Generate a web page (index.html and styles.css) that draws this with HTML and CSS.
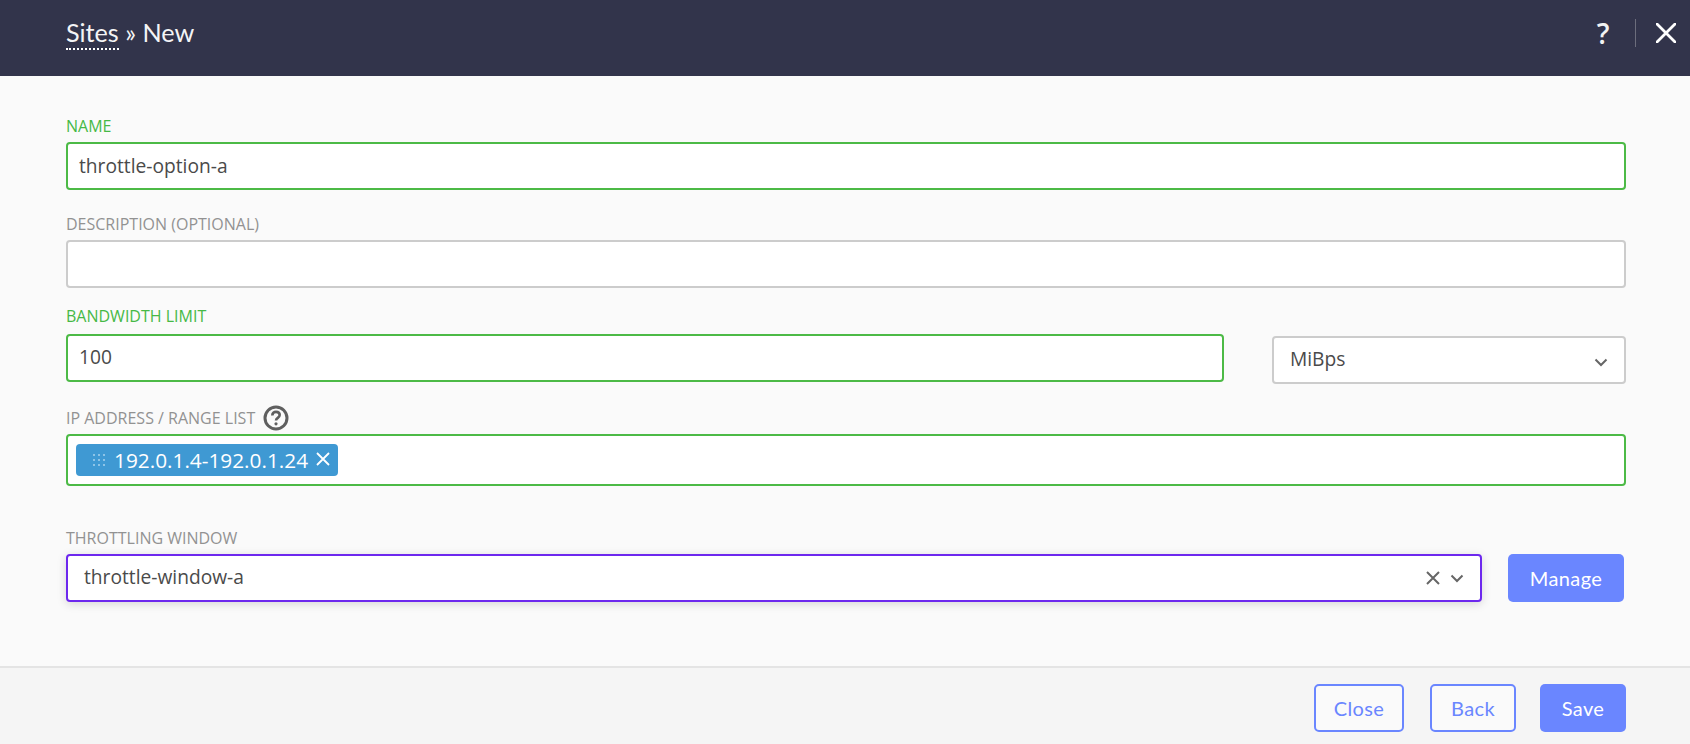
FILE: index.html
```html
<!DOCTYPE html>
<html lang="en">
<head>
<meta charset="utf-8">
<title>Sites » New</title>
<link rel="stylesheet" href="styles.css">
</head>
<body>
<div class="page">
  <header class="topbar">
    <h1 class="crumbs"><span class="crumb-link">Sites</span> » New</h1>
    <div class="top-actions">
      <span class="help">?</span>
      <span class="divider"></span>
      <svg class="close-x" width="20" height="20" viewBox="0 0 20 20"><path d="M1 1L19 19M19 1L1 19" stroke="#fff" stroke-width="2.8" stroke-linecap="round" fill="none"/></svg>
    </div>
  </header>
  <main class="form">
    <div class="field f-name">
      <label class="label ok">NAME</label>
      <div class="input ok-box name-input">throttle-option-a</div>
    </div>
    <div class="field f-desc">
      <label class="label">DESCRIPTION (OPTIONAL)</label>
      <div class="input"></div>
    </div>
    <div class="bw-row">
      <div class="field bw-main">
        <label class="label ok">BANDWIDTH LIMIT</label>
        <div class="input ok-box">100</div>
      </div>
      <div class="input select unit">
        <span class="unit-text">MiBps</span>
        <svg class="chev" width="14" height="9" viewBox="0 0 14 9"><path d="M1.5 1.5L7 7L12.5 1.5" stroke="#666" stroke-width="2" fill="none"/></svg>
      </div>
    </div>
    <div class="field f-ip">
      <label class="label label-help">IP ADDRESS / RANGE LIST
        <svg class="q-icon" width="26" height="26" viewBox="0 0 26 26"><circle cx="13" cy="13" r="11" stroke="#5f5f5f" stroke-width="3" fill="none"/><path d="M9.3 10.4c0-2.2 1.6-3.5 3.7-3.5s3.7 1.3 3.7 3.2c0 2.9-3.7 2.7-3.7 5.4" stroke="#5f5f5f" stroke-width="2.6" fill="none"/><circle cx="13" cy="18.8" r="1.6" fill="#5f5f5f"/></svg>
      </label>
      <div class="tag-box ok-box">
        <span class="tag">
          <svg class="grip" width="14" height="14" viewBox="0 0 14 14"><g fill="#a9d3ee"><circle cx="2" cy="2" r="1"/><circle cx="7" cy="2" r="1"/><circle cx="12" cy="2" r="1"/><circle cx="2" cy="7" r="1"/><circle cx="7" cy="7" r="1"/><circle cx="12" cy="7" r="1"/><circle cx="2" cy="12" r="1"/><circle cx="7" cy="12" r="1"/><circle cx="12" cy="12" r="1"/></g></svg>
          <span class="tag-text">192.0.1.4-192.0.1.24</span>
          <svg class="tag-x" width="14" height="14" viewBox="0 0 14 14"><path d="M1 1L13 13M13 1L1 13" stroke="#fff" stroke-width="1.8" fill="none"/></svg>
        </span>
      </div>
    </div>
    <div class="field f-win">
      <label class="label">THROTTLING WINDOW</label>
      <div class="win-row">
        <div class="input select focus">
          <span class="win-text">throttle-window-a</span>
          <span class="select-icons">
            <svg width="14" height="14" viewBox="0 0 14 14"><path d="M1 1L13 13M13 1L1 13" stroke="#666" stroke-width="2" fill="none"/></svg>
            <svg width="14" height="9" viewBox="0 0 14 9"><path d="M1.5 1.5L7 7L12.5 1.5" stroke="#666" stroke-width="2" fill="none"/></svg>
          </span>
        </div>
        <button class="btn solid manage">Manage</button>
      </div>
    </div>
  </main>
  <footer class="footer">
    <button class="btn outline b-close">Close</button>
    <button class="btn outline b-back">Back</button>
    <button class="btn solid b-save">Save</button>
  </footer>
</div>
</body>
</html>
```
FILE: styles.css
```css
* { box-sizing: border-box; }
html, body { margin: 0; padding: 0; height: 100%; }
body { font-family: "Open Sans", "Liberation Sans", sans-serif; background: #fafafa; overflow: hidden; }
.page { display: flex; flex-direction: column; height: 744px; }
.topbar { height: 76px; flex: none; background: #32344b; color: #fff; display: flex; align-items: center; justify-content: space-between; padding: 0 14px 10px 66px; }
.crumbs { margin: 0; font-family: Lato, "Noto Sans", sans-serif; font-weight: 400; font-size: 25.2px; line-height: 32px; color: #f4f4f6; }
.crumb-link { border-bottom: 2px dotted #fff; display: inline-block; line-height: 31px; }
.top-actions { display: flex; align-items: center; }
.help { font-size: 28px; font-weight: 600; line-height: 34px; color: #f2f2f2; width: 14px; display: flex; justify-content: center; margin-right: 1px; }
.divider { width: 1px; height: 28px; background: #6c6d7c; margin: 0 20px 0 24px; }
.close-x { display: block; }
.form { flex: 1; padding: 40px 64px 0 66px; }
.field { display: block; }
.label { display: block; font-size: 16px; line-height: 20px; color: #929292; margin-bottom: 6px; }
.label.ok { color: #46b946; }
.input { height: 48px; background: #fff; border: 2px solid #cccccc; border-radius: 4px; font-size: 19.2px; line-height: 42px; padding: 0 11px; color: #4a4a4a; }
.name-input { line-height: 44px; }
.ok-box { border-color: #4cba46; }
.f-desc { margin-top: 24px; }
.bw-row { display: flex; align-items: flex-end; margin-top: 18px; }
.bw-main { width: 1158px; flex: none; }
.bw-main .label { margin-bottom: 8px; }
.select { display: flex; align-items: center; justify-content: space-between; }
.unit { flex: 1; margin-left: 48px; margin-bottom: -2px; padding: 0 16px; }
.unit-text { margin-top: -3px; }
.chev { margin-top: 4px; }
.f-ip { margin-top: 26px; }
.label-help { display: flex; align-items: center; height: 20px; gap: 8px; }
.q-icon { display: block; flex: none; }
.tag-box { height: 52px; background: #fff; border: 2px solid #4cba46; border-radius: 4px; padding: 8px; }
.tag { display: inline-flex; align-items: center; height: 32px; background: #3f99d3; border-radius: 4px; color: #fff; padding: 0 8px 0 16px; }
.grip { display: block; }
.tag-text { font-size: 20.8px; margin-left: 8px; margin-right: 8px; line-height: 32px; margin-top: -1px; }
.tag-x { display: block; margin-top: -2px; }
.f-win { margin-top: 42px; }
.win-row { display: flex; align-items: center; }
.focus { width: 1416px; flex: none; border-color: #6d28ee; box-shadow: 0 2px 10px rgba(0,0,0,.15); padding: 0 16px 0 16px; }
.win-text { margin-top: -2px; }
.select-icons { display: flex; align-items: center; gap: 10px; }
.select-icons svg { display: block; }
.btn { font-family: Lato, "Noto Sans", sans-serif; font-size: 20px; letter-spacing: .4px; height: 48px; border-radius: 5px; padding: 0; cursor: pointer; }
.solid { background: #6a86ff; color: #fff; border: 0; }
.outline { background: #fafafa; color: #6a86ff; border: 2px solid #6a86ff; }
.manage { width: 116px; margin-left: 26px; }
.footer { flex: none; height: 78px; background: #f5f5f5; border-top: 2px solid #e4e4e4; display: flex; align-items: flex-start; justify-content: flex-end; padding: 16px 64px 0 0; }
.b-close { width: 90px; }
.b-back { width: 86px; margin-left: 26px; }
.b-save { width: 86px; margin-left: 24px; }
```
